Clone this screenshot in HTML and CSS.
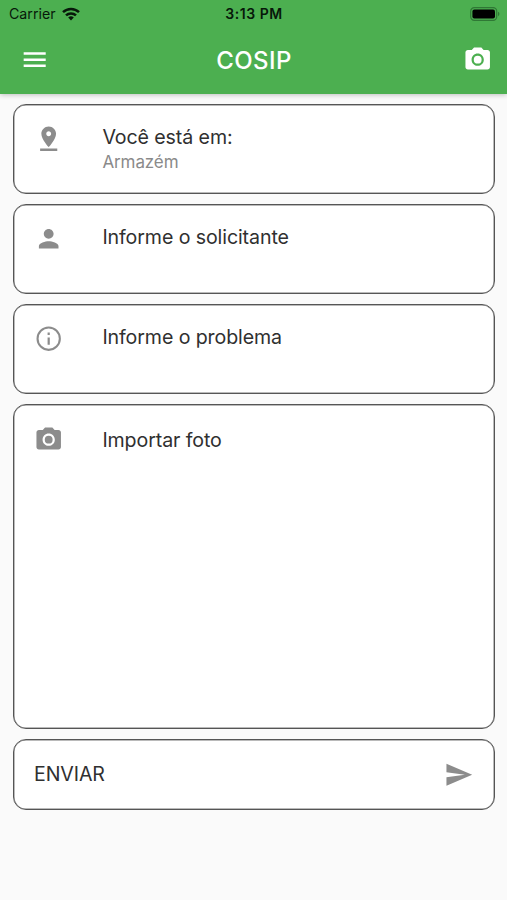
FILE: index.html
```html
<!DOCTYPE html>
<html lang="pt-BR">
<head>
<meta charset="utf-8">
<title>COSIP</title>
<link rel="stylesheet" href="styles.css">
</head>
<body>
<header class="top">
  <div class="status">
    <div class="carrier"><span>Carrier</span>
      <svg class="wifi" viewBox="0 0 18 14" fill="none" stroke="#07180a" stroke-width="2.5"><path d="M1 5.1a11.7 11.7 0 0 1 16 0M4 8.4a7.2 7.2 0 0 1 10 0"/><path d="M9 13.4 6.2 10.6a4 4 0 0 1 5.6 0z" fill="#07180a" stroke="none"/></svg>
    </div>
    <span class="time">3:13 PM</span>
    <svg class="battery" viewBox="0 0 30 14"><rect x=".7" y=".7" width="26" height="12.6" rx="3.6" fill="none" stroke="#2f7835" stroke-width="1.2"/><rect x="2.4" y="2.4" width="22.6" height="9.2" rx="2" fill="#000"/><path d="M28 4.8a2.4 2.4 0 0 1 0 4.4z" fill="#2f7835"/></svg>
  </div>
  <div class="bar">
    <svg class="icon" viewBox="0 0 24 24"><path d="M3 18h18v-2H3v2zm0-5h18v-2H3v2zm0-7v2h18V6H3z"/></svg>
    <h1>COSIP</h1>
    <svg class="icon" viewBox="0 0 24 24"><circle cx="12" cy="12" r="3.2"/><path fill-rule="evenodd" d="M9 2 7.17 4H4c-1.1 0-2 .9-2 2v12c0 1.1.9 2 2 2h16c1.1 0 2-.9 2-2V6c0-1.1-.9-2-2-2h-3.17L15 2H9zm3 15c-2.76 0-5-2.24-5-5s2.24-5 5-5 5 2.24 5 5-2.24 5-5 5z"/></svg>
  </div>
</header>
<main>
  <section class="card">
    <svg class="icon" viewBox="0 0 24 24"><path d="M18 8c0-3.31-2.69-6-6-6S6 4.69 6 8c0 4.5 6 11 6 11s6-6.5 6-11zm-8 0c0-1.1.9-2 2-2s2 .9 2 2-.89 2-2 2c-1.1 0-2-.9-2-2zM5 20v2h14v-2H5z"/></svg>
    <div class="text"><h2>Você está em:</h2><p>Armazém</p></div>
  </section>
  <section class="card">
    <svg class="icon" viewBox="0 0 24 24"><path d="M12 12c2.21 0 4-1.79 4-4s-1.79-4-4-4-4 1.79-4 4 1.79 4 4 4zm0 2c-2.67 0-8 1.34-8 4v2h16v-2c0-2.66-5.33-4-8-4z"/></svg>
    <div class="text"><h2>Informe o solicitante</h2></div>
  </section>
  <section class="card">
    <svg class="icon" viewBox="0 0 24 24"><path d="M11.1 7h1.8v2h-1.8zm0 4h1.8v6h-1.8z"/><circle cx="12" cy="12" r="9.1" fill="none" stroke="#8c8c8c" stroke-width="1.7"/></svg>
    <div class="text"><h2>Informe o problema</h2></div>
  </section>
  <section class="card photo">
    <svg class="icon" viewBox="0 0 24 24"><circle cx="12" cy="12" r="3.2"/><path fill-rule="evenodd" d="M9 2 7.17 4H4c-1.1 0-2 .9-2 2v12c0 1.1.9 2 2 2h16c1.1 0 2-.9 2-2V6c0-1.1-.9-2-2-2h-3.17L15 2H9zm3 15c-2.76 0-5-2.24-5-5s2.24-5 5-5 5 2.24 5 5-2.24 5-5 5z"/></svg>
    <div class="text"><h2>Importar foto</h2></div>
  </section>
  <section class="card send">
    <h2>ENVIAR</h2>
    <svg class="icon" viewBox="0 0 24 24"><path d="M2.01 21 23 12 2.01 3 2 10l15 2-15 2z"/></svg>
  </section>
</main>
</body>
</html>
```
FILE: styles.css
```css
* { box-sizing: border-box; }
body {
  margin: 0;
  min-height: 900px;
  background: #fafafa;
  color: #303030;
  font-family: Inter, "Liberation Sans", sans-serif;
}
h1, h2, p { margin: 0; font-weight: 400; white-space: nowrap; }
.icon { width: 29.4px; height: 29.4px; flex: none; fill: #8c8c8c; display: block; }

.top {
  height: 94px;
  background: #4caf50;
  box-shadow: 0 1px 5px rgba(0, 0, 0, .24);
}
.status {
  height: 27px;
  padding: 0 7px 0 9px;
  display: grid;
  grid-template-columns: 1fr auto 1fr;
  align-items: center;
  color: #07180a;
  font-size: 14.2px;
  line-height: 27px;
}
.carrier { display: flex; align-items: center; gap: 6px; }
.wifi { width: 18px; height: 14px; }
.time { font-size: 14px; font-weight: 600; letter-spacing: .55px; margin-right: 1px; }
.battery { width: 30px; height: 14px; justify-self: end; }
.bar {
  height: 66px;
  padding: 0 15px 0 20px;
  display: flex;
  align-items: center;
  justify-content: space-between;
}
.bar .icon { fill: #fff; }
.bar h1 { color: #fff; font-size: 24px; font-weight: 500; letter-spacing: .4px; margin-right: 4px; }

main {
  padding: 9.5px 12px 0 13px;
  display: flex;
  flex-direction: column;
  gap: 10px;
}
.card {
  height: 90.2px;
  padding: 19.5px 20px 0 20px;
  display: flex;
  align-items: flex-start;
  gap: 39px;
  background: #fff;
  border: 1px solid #555;
  box-shadow: inset 0 0 0 .5px #777;
  border-radius: 13px;
}
.card h2 { font-size: 19.6px; line-height: 26px; letter-spacing: -.1px; }
.card p { font-size: 17px; line-height: 24px; letter-spacing: -.1px; color: #8a8a8a; }
.photo { height: 325px; }
.photo h2 { padding-top: 2px; }
.send {
  height: 70.5px;
  padding: 0 21px 0 20px;
  align-items: center;
  justify-content: space-between;
}
```
